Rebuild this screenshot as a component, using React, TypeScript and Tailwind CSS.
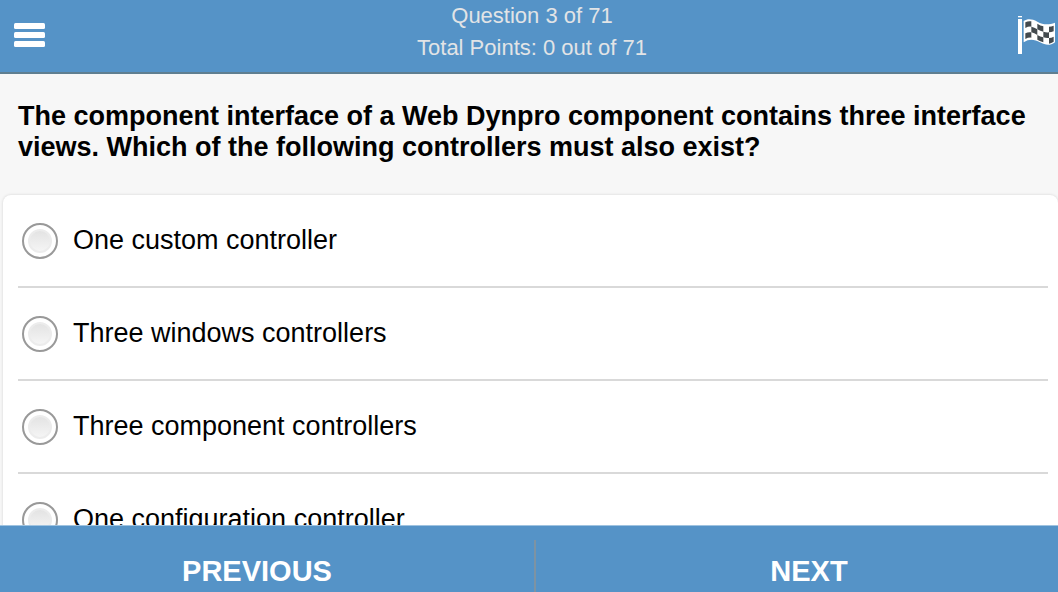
const answers = [
  "One custom controller",
  "Three windows controllers",
  "Three component controllers",
  "One configuration controller",
];

function MenuIcon() {
  return (
    <svg viewBox="0 0 32 24" className="h-6 w-8" fill="#fff" aria-hidden="true">
      <rect x="0" y="0" width="31" height="6" rx="1.5" />
      <rect x="0" y="9" width="31" height="6" rx="1.5" />
      <rect x="0" y="18" width="31" height="6" rx="1.5" />
    </svg>
  );
}

function FlagIcon() {
  return (
    <svg viewBox="0 0 132 138" className="h-[46px] w-11" aria-hidden="true">
      <rect x="12" y="12" width="12" height="4" fill="#fff" />
      <rect x="12" y="21" width="12" height="105" fill="#fff" />
      <path
        d="M29 27C42 19 54 21 70 29C88 39 104 39 123 32V91C106 103 94 99 78 91C62 82 46 79 29 91Z"
        fill="#fff"
      />
      <g fill="#434a4e">
        <path d="M34 31Q43 26 52 28V44Q43 43 34 48Z" />
        <path d="M70 35Q79 41 88 43V59Q79 57 70 52Z" />
        <path d="M105 44Q112 44 119 41V58Q112 61 105 61Z" />
        <path d="M52 44Q61 46 70 52V69Q61 63 52 61Z" />
        <path d="M88 59Q97 62 105 61V78Q97 79 88 76Z" />
        <path d="M34 64Q43 59 52 61V77Q43 76 34 81Z" />
        <path d="M70 69Q79 74 88 76V91Q79 88 70 83Z" />
        <path d="M105 78Q112 78 119 74V89Q112 94 105 95Z" />
      </g>
    </svg>
  );
}

export default function App() {
  return (
    <div className="flex h-screen flex-col overflow-hidden bg-[#f7f7f7] font-['Liberation_Sans',Arial,sans-serif] text-black">
      <header className="flex shrink-0 items-start justify-between border-b-2 border-[#5f7e90] bg-[#5593c7]">
        <button type="button" aria-label="Menu" className="flex w-14 pt-[23px] pl-3.5">
          <MenuIcon />
        </button>
        <div className="pb-2 pl-1.5 text-center text-[22px] leading-8 text-[#e2e4e6]">
          <p>Question 3 of 71</p>
          <p>Total Points: 0 out of 71</p>
        </div>
        <button type="button" aria-label="Finish" className="flex w-14 justify-end pt-3">
          <FlagIcon />
        </button>
      </header>

      <main className="flex min-h-0 flex-1 flex-col overflow-hidden">
        <h1 id="question" className="px-[18px] pt-[27px] pb-8 text-[27px] leading-[31px] font-bold">
          The component interface of a Web Dynpro component contains three interface views. Which of
          the following controllers must also exist?
        </h1>
        <div
          role="radiogroup"
          aria-labelledby="question"
          className="ml-[3px] shrink-0 rounded-lg bg-white pr-2.5 pl-[15px] shadow-[0_0_3px_rgba(0,0,0,0.15)]"
        >
          {answers.map((answer, index) => (
            <label
              key={answer}
              htmlFor={`answer-${index}`}
              className="flex h-[93px] items-center gap-[15px] border-b-2 border-[#d9d9d9] pl-1 text-[27px]"
            >
              <input
                id={`answer-${index}`}
                type="radio"
                name="answer"
                className="size-9 shrink-0 appearance-none rounded-full border-2 border-[#999] bg-linear-to-b from-[#dedede] to-[#fafafa] bg-clip-content p-1 shadow-[inset_0_0_0_4px_#fff,inset_0_0_0_6px_#ececec] checked:from-[#5593c7] checked:to-[#5593c7]"
              />
              {answer}
            </label>
          ))}
        </div>
      </main>

      <footer className="flex shrink-0 border-t border-[#9fc3e0] bg-[#5593c7] pt-3.5 pl-2 text-[29px] leading-[34px] font-bold text-white">
        <button type="button" className="flex-1 border-r-2 border-[#7d93a3] pt-3.5 pr-7 pb-1">
          PREVIOUS
        </button>
        <button type="button" className="flex-1 pt-3.5 pb-1 pl-6">
          NEXT
        </button>
      </footer>
    </div>
  );
}
